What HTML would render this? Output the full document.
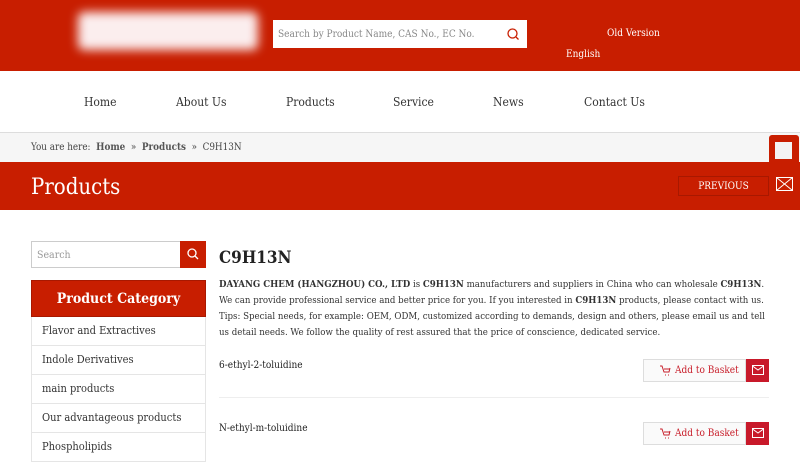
<!DOCTYPE html>
<html><head><meta charset="utf-8"><style>
*{margin:0;padding:0;box-sizing:border-box}
body{width:800px;height:450px;overflow:hidden;background:#fff;font-family:"DejaVu Serif Condensed","DejaVu Serif",serif;font-stretch:condensed;color:#333;position:relative}
.a{position:absolute;white-space:nowrap}
.hdr{left:0;top:0;width:800px;height:71px;background:#c81e00}
.logo{left:78px;top:12px;width:180px;height:38px;background:#fbeeee;filter:blur(5px);border-radius:6px}
.sb{left:273px;top:20px;width:254px;height:28px;background:#fff;font-size:10px;color:#888;padding:9px 0 0 5px}
.nav{top:95px;font-size:12px;color:#333}
.bc{left:0;top:132px;width:800px;height:30px;background:#f6f6f6;border-top:1px solid #ddd;font-size:9.8px;color:#444;padding:9px 31px}
.bc b{font-weight:bold;color:#555}
.ban{left:0;top:162px;width:800px;height:48px;background:#c81e00}
.item{font-size:10px;color:#222}
.btn{width:103px;height:23px;border:1px solid #ddd;background:#fafafa;color:#c81e2a;font-size:10px;padding:5px 0 0 31px}
.mail{width:23px;height:23px;background:#c8192a}
.cat{left:31px;width:175px;height:29px;border:1px solid #e5e5e5;border-top:none;font-size:11px;padding:7px 10px;color:#333}
</style></head><body>
<div class="a hdr"></div>
<div class="a logo"></div>
<div class="a sb">Search by Product Name, CAS No., EC No.
<svg class="a" style="left:234px;top:8px" width="12" height="12"><circle cx="5.5" cy="5.5" r="4.5" fill="none" stroke="#c81e00" stroke-width="1.3"/><line x1="9" y1="9" x2="11.5" y2="11.5" stroke="#c81e00" stroke-width="1.3"/></svg></div>
<div class="a" style="left:607px;top:28px;font-size:10px;color:#fff">Old Version</div>
<div class="a" style="left:566px;top:49px;font-size:10px;color:#fff">English</div>
<div class="a nav" style="left:84px">Home</div>
<div class="a nav" style="left:176px">About Us</div>
<div class="a nav" style="left:286px">Products</div>
<div class="a nav" style="left:393px">Service</div>
<div class="a nav" style="left:493px">News</div>
<div class="a nav" style="left:584px">Contact Us</div>
<div class="a bc">You are here:&nbsp; <b>Home</b> &nbsp;»&nbsp; <b>Products</b> &nbsp;»&nbsp; C9H13N</div>
<div class="a ban"></div>
<div class="a" style="left:769px;top:135px;width:30px;height:30px;background:#c81e00;border-radius:3px"><div class="a" style="left:6px;top:7px;width:17px;height:17px;background:#f4f4f4"></div></div>
<div class="a" style="left:31px;top:175px;font-size:22px;color:#fff">Products</div>
<div class="a" style="left:678px;top:176px;width:91px;height:20px;border:1px solid #a81800;color:#fff;font-size:10px;text-align:center;padding-top:4px">PREVIOUS</div>
<svg class="a" style="left:776px;top:177px" width="17" height="14"><rect x="0.5" y="0.5" width="16" height="13" fill="none" stroke="#fff"/><path d="M0.5 0.5L16.5 13.5M16.5 0.5L0.5 13.5" stroke="#fff"/></svg>
<div class="a" style="left:31px;top:241px;width:150px;height:27px;border:1px solid #ccc;font-size:10.5px;color:#999;padding:7px 5px">Search</div>
<div class="a" style="left:180px;top:241px;width:26px;height:27px;background:#c81e00"><svg class="a" style="left:7px;top:7px" width="12" height="12"><circle cx="5" cy="5" r="4" fill="none" stroke="#fff" stroke-width="1.3"/><line x1="8" y1="8" x2="11" y2="11" stroke="#fff" stroke-width="1.3"/></svg></div>
<div class="a" style="left:31px;top:280px;width:175px;height:37px;background:#c81e00;color:#fff;font-weight:bold;font-size:14px;text-align:center;padding-top:10px;border:1px solid #a81800">Product Category</div>
<div class="a cat" style="top:317px">Flavor and Extractives</div>
<div class="a cat" style="top:346px">Indole Derivatives</div>
<div class="a cat" style="top:375px">main products</div>
<div class="a cat" style="top:404px">Our advantageous products</div>
<div class="a cat" style="top:433px">Phospholipids</div>
<div class="a" style="left:219px;top:248px;font-size:17px;font-weight:bold;color:#222">C9H13N</div>
<div class="a" style="left:219px;top:277px;width:556px;font-size:9.6px;line-height:16px;color:#333;white-space:normal"><b>DAYANG CHEM (HANGZHOU) CO., LTD</b> is <b>C9H13N</b> manufacturers and suppliers in China who can wholesale <b>C9H13N</b>. We can provide professional service and better price for you. If you interested in <b>C9H13N</b> products, please contact with us. Tips: Special needs, for example: OEM, ODM, customized according to demands, design and others, please email us and tell us detail needs. We follow the quality of rest assured that the price of conscience, dedicated service.</div>
<div class="a item" style="left:219px;top:360px">6-ethyl-2-toluidine</div>
<div class="a btn" style="left:643px;top:359px">Add to Basket</div>
<div class="a mail" style="left:746px;top:359px"></div>
<div class="a" style="left:219px;top:397px;width:550px;height:1px;background:#eee"></div>
<div class="a item" style="left:219px;top:423px">N-ethyl-m-toluidine</div>
<div class="a btn" style="left:643px;top:422px">Add to Basket</div>
<div class="a mail" style="left:746px;top:422px"></div>
<svg class="a" style="left:659px;top:364px" width="12" height="12"><path d="M1 2h2l2 6h5l1-4M5 5h6M6 11h1M9 11h1" fill="none" stroke="#c81e2a"/></svg>
<svg class="a" style="left:659px;top:427px" width="12" height="12"><path d="M1 2h2l2 6h5l1-4M5 5h6M6 11h1M9 11h1" fill="none" stroke="#c81e2a"/></svg>
<svg class="a" style="left:752px;top:365px" width="12" height="10"><rect x="0.5" y="0.5" width="11" height="9" fill="none" stroke="#fff"/><path d="M0.5 1L6 5L11.5 1" fill="none" stroke="#fff"/></svg>
<svg class="a" style="left:752px;top:428px" width="12" height="10"><rect x="0.5" y="0.5" width="11" height="9" fill="none" stroke="#fff"/><path d="M0.5 1L6 5L11.5 1" fill="none" stroke="#fff"/></svg>
</body></html>
